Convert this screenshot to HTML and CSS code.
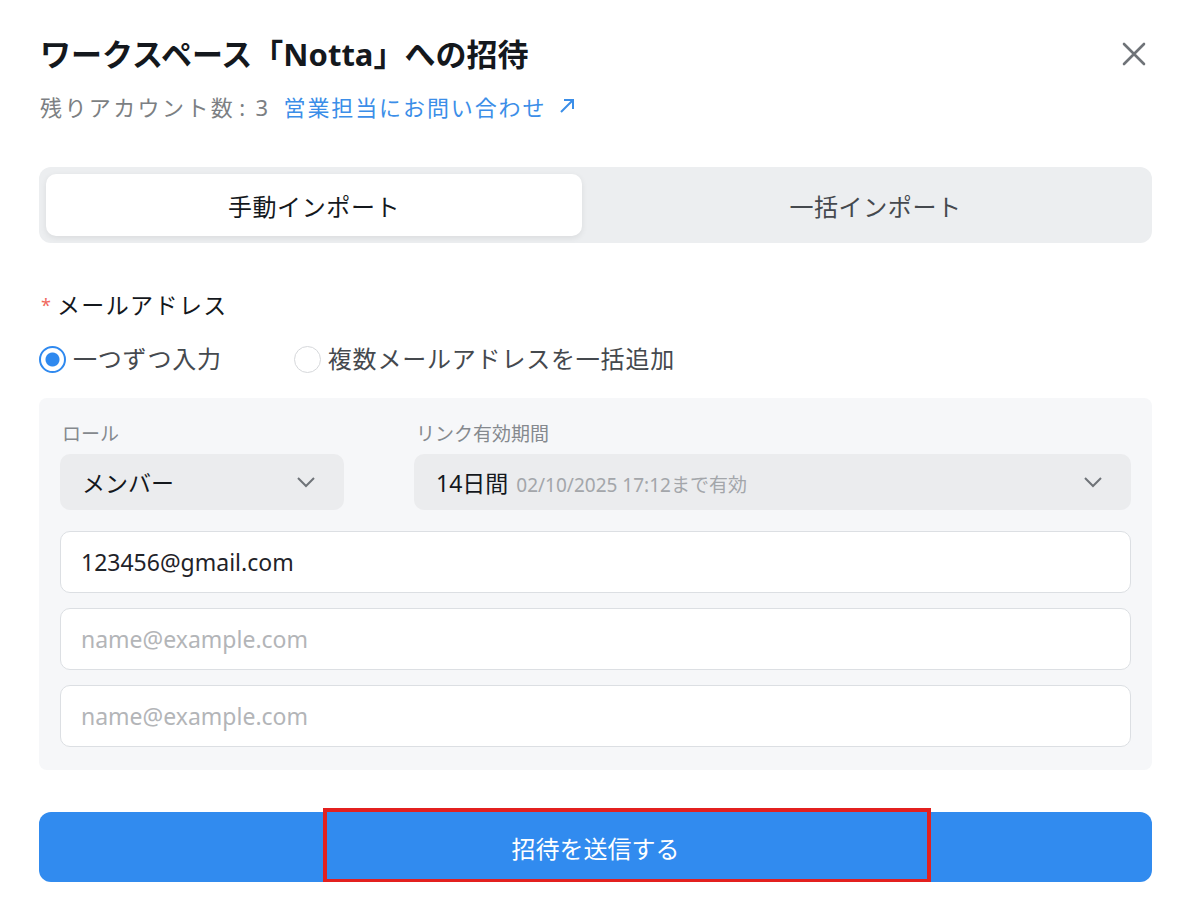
FILE: index.html
```html
<!DOCTYPE html>
<html lang="ja">
  <head>
    <meta charset="UTF-8" />
    <meta name="viewport" content="width=device-width, initial-scale=1.0" />
    <title>ワークスペースへの招待</title>
    <link rel="stylesheet" href="styles.css">
  </head>
  <body>
    <div class="dialog">
      <div class="head">
        <h1 class="title">ワークスペース「Notta」への招待</h1>
        <a class="close" href="#">
          <svg width="24" height="24" viewBox="0 0 24 24">
            <path d="M2 2 L22 22 M22 2 L2 22" stroke="#6f7378" stroke-width="2.6" stroke-linecap="round" fill="none" />
          </svg>
        </a>
      </div>
      <p class="sub"><span>残りアカウント数</span><span class="colon">:</span><span class="count">3</span><a class="link" href="#">営業担当にお問い合わせ<svg width="18" height="18" viewBox="0 0 18 18"><path d="M3 15 L15 3 M6 3 H15 V12" stroke="#3b8ee8" stroke-width="2" fill="none" /></svg></a></p>

      <div class="tabs">
        <div class="tab active">手動インポート</div>
        <div class="tab">一括インポート</div>
      </div>

      <div class="label"><span class="req">*</span>メールアドレス</div>

      <div class="radios">
        <label class="radio checked"><span class="dot"></span>一つずつ入力</label>
        <label class="radio"><span class="dot"></span>複数メールアドレスを一括追加</label>
      </div>

      <div class="panel">
        <div class="fields">
          <div class="field role">
            <div class="field-name">ロール</div>
            <div class="select">
              <span>メンバー</span>
              <svg class="chev" width="20" height="12" viewBox="0 0 20 12">
                <path d="M2 2 L10 10 L18 2" stroke="#6f7378" stroke-width="2" fill="none" />
              </svg>
            </div>
          </div>
          <div class="field expire">
            <div class="field-name">リンク有効期間</div>
            <div class="select">
              <span>14日間 <small class="hint">02/10/2025 17:12まで有効</small></span>
              <svg class="chev" width="20" height="12" viewBox="0 0 20 12">
                <path d="M2 2 L10 10 L18 2" stroke="#6f7378" stroke-width="2" fill="none" />
              </svg>
            </div>
          </div>
        </div>
        <div class="inputs">
          <input class="email" type="text" value="123456@gmail.com" />
          <input class="email" type="text" placeholder="name@example.com" />
          <input class="email" type="text" placeholder="name@example.com" />
        </div>
      </div>

      <div class="submit-wrap">
        <button class="submit">招待を送信する</button>
        <div class="mark"></div>
      </div>
    </div>
  </body>
</html>
```

FILE: styles.css
```css
* {
  margin: 0;
  padding: 0;
  box-sizing: border-box;
}
body {
  background: #fff;
  font-family: "Noto Sans", "Noto Sans CJK JP", sans-serif;
  color: #1f2329;
}
a {
  text-decoration: none;
}
.dialog {
  width: 1113px;
  margin-left: 39px;
  padding-top: 34px;
}
.head {
  display: flex;
  justify-content: space-between;
  align-items: center;
}
.title {
  font-size: 31px;
  line-height: 40px;
  font-weight: 700;
  color: #14181d;
  padding-left: 1px;
}
.close {
  display: flex;
  margin-right: 6px;
}
.sub {
  margin-top: 17px;
  font-size: 22px;
  line-height: 32px;
  color: #7c7f83;
  padding-left: 1px;
  letter-spacing: 2.4px;
}
.colon {
  margin-left: 4px;
}
.count {
  margin-left: 8px;
}
.link {
  color: #3b8ee8;
  margin-left: 13px;
  letter-spacing: 1.9px;
}
.link svg {
  margin-left: 12px;
  vertical-align: 1px;
}
.tabs {
  margin-top: 44px;
  height: 76px;
  padding: 7px;
  background: #eceef0;
  border-radius: 12px;
  display: flex;
}
.tab {
  flex: 1;
  display: flex;
  align-items: center;
  justify-content: center;
  font-size: 24px;
  color: #45494e;
  border-radius: 10px;
  letter-spacing: 0.6px;
  padding-left: 24px;
}
.tab.active {
  flex: 0 0 536px;
  padding-left: 0;
  background: #fff;
  color: #14181d;
  box-shadow: 0 2px 6px rgba(0, 0, 0, 0.08);
}
.label {
  margin-top: 46px;
  font-size: 23px;
  line-height: 32px;
  color: #14181d;
  letter-spacing: 1.4px;
}
.req {
  color: #f0695d;
  font-size: 18px;
  margin: 0 6px 0 2px;
  vertical-align: 2px;
  letter-spacing: 0;
}
.radios {
  margin-top: 21px;
  display: flex;
  gap: 72px;
}
.radio {
  display: flex;
  align-items: center;
  gap: 7px;
  font-size: 24px;
  line-height: 34px;
  color: #45494e;
  letter-spacing: 0.8px;
}
.dot {
  width: 27px;
  height: 27px;
  border-radius: 50%;
  border: 1px solid #d6d8db;
  background: #fff;
}
.radio.checked .dot {
  border: 2px solid #2f89ef;
  background: radial-gradient(circle, #2f89ef 0 6.5px, #fff 7.5px);
}
.panel {
  margin-top: 22px;
  background: #f6f7f9;
  border-radius: 8px;
  padding: 22px 21px 23px 21px;
}
.fields {
  display: flex;
  gap: 70px;
}
.role {
  width: 284px;
}
.expire {
  flex: 1;
}
.field-name {
  font-size: 19px;
  line-height: 28px;
  color: #85898e;
  margin-left: 2px;
}
.select {
  margin-top: 6px;
  height: 56px;
  background: #ebecee;
  border-radius: 10px;
  display: flex;
  align-items: center;
  justify-content: space-between;
  padding: 0 28px 0 22px;
  font-size: 23px;
  color: #14181d;
}
.hint {
  font-size: 19px;
  color: #a3a6aa;
  margin-left: 2px;
}
.inputs {
  margin-top: 21px;
  display: flex;
  flex-direction: column;
  gap: 15px;
}
.email {
  height: 62px;
  border: 1px solid #dcdfe3;
  border-radius: 10px;
  background: #fff;
  padding: 0 20px;
  font-family: "Noto Sans", "Noto Sans CJK JP", sans-serif;
  font-size: 23px;
  color: #1f2329;
  outline: none;
}
.email::placeholder {
  color: #b3b5b8;
}
.submit-wrap {
  margin-top: 42px;
  position: relative;
}
.submit {
  width: 100%;
  height: 70px;
  border: none;
  border-radius: 12px;
  background: #318bef;
  color: #fff;
  font-family: "Noto Sans", "Noto Sans CJK JP", sans-serif;
  font-size: 24px;
}
.mark {
  position: absolute;
  left: 284px;
  top: -4px;
  width: 608px;
  height: 75px;
  border: 4px solid #e3201f;
}
```
